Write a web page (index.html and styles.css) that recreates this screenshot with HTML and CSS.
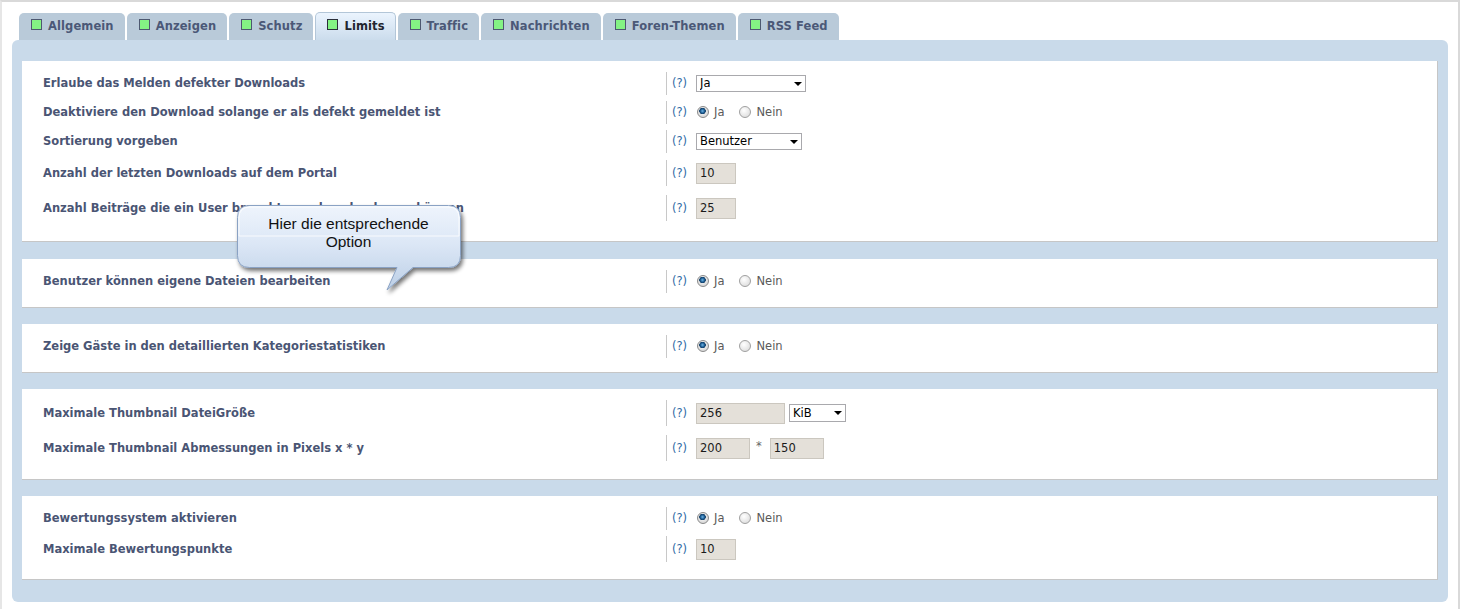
FILE: index.html
```html
<!DOCTYPE html>
<html lang="de">
<head>
    <meta charset="UTF-8">
    <title>Download Einstellungen - Limits</title>
    <link rel="stylesheet" href="styles.css">
</head>
<body>
<div class="page">
    <!-- Tabs -->
    <div class="tabs">
        <div class="tab"><span class="tab-icon"></span>Allgemein</div>
        <div class="tab"><span class="tab-icon"></span>Anzeigen</div>
        <div class="tab"><span class="tab-icon"></span>Schutz</div>
        <div class="tab active"><span class="tab-icon"></span>Limits</div>
        <div class="tab"><span class="tab-icon"></span>Traffic</div>
        <div class="tab"><span class="tab-icon"></span>Nachrichten</div>
        <div class="tab"><span class="tab-icon"></span>Foren-Themen</div>
        <div class="tab"><span class="tab-icon"></span>RSS Feed</div>
    </div>

    <div class="panel">
        <div class="box box-first">
            <div class="row">
                <div class="label">Erlaube das Melden defekter Downloads</div>
                <div class="value">
                    <span class="help">(?)</span>
                    <span class="select-wrap"><select class="select select-ja"><option>Ja</option><option>Nein</option></select></span>
                </div>
            </div>
            <div class="row">
                <div class="label">Deaktiviere den Download solange er als defekt gemeldet ist</div>
                <div class="value">
                    <span class="help">(?)</span>
                    <label class="radio"><input type="radio" name="r1" checked>Ja</label>
                    <label class="radio"><input type="radio" name="r1">Nein</label>
                </div>
            </div>
            <div class="row">
                <div class="label">Sortierung vorgeben</div>
                <div class="value">
                    <span class="help">(?)</span>
                    <span class="select-wrap"><select class="select select-sort"><option>Benutzer</option></select></span>
                </div>
            </div>
            <div class="row row-input">
                <div class="label">Anzahl der letzten Downloads auf dem Portal</div>
                <div class="value">
                    <span class="help">(?)</span>
                    <input class="text" type="text" value="10">
                </div>
            </div>
            <div class="row row-input">
                <div class="label">Anzahl Beiträge die ein User braucht, um downloaden zu können</div>
                <div class="value">
                    <span class="help">(?)</span>
                    <input class="text" type="text" value="25">
                </div>
            </div>
        </div>

        <div class="box">
            <div class="row">
                <div class="label">Benutzer können eigene Dateien bearbeiten</div>
                <div class="value">
                    <span class="help">(?)</span>
                    <label class="radio"><input type="radio" name="r2" checked>Ja</label>
                    <label class="radio"><input type="radio" name="r2">Nein</label>
                </div>
            </div>
        </div>

        <div class="box">
            <div class="row">
                <div class="label">Zeige Gäste in den detaillierten Kategoriestatistiken</div>
                <div class="value">
                    <span class="help">(?)</span>
                    <label class="radio"><input type="radio" name="r3" checked>Ja</label>
                    <label class="radio"><input type="radio" name="r3">Nein</label>
                </div>
            </div>
        </div>

        <div class="box box-thumb">
            <div class="row row-input">
                <div class="label">Maximale Thumbnail DateiGröße</div>
                <div class="value">
                    <span class="help">(?)</span>
                    <input class="text text-wide" type="text" value="256">
                    <span class="select-wrap"><select class="select select-unit"><option>KiB</option><option>MiB</option></select></span>
                </div>
            </div>
            <div class="row row-input">
                <div class="label">Maximale Thumbnail Abmessungen in Pixels x * y</div>
                <div class="value">
                    <span class="help">(?)</span>
                    <input class="text text-mid" type="text" value="200">
                    <span class="times">*</span>
                    <input class="text text-mid" type="text" value="150">
                </div>
            </div>
        </div>

        <div class="box box-last">
            <div class="row">
                <div class="label">Bewertungssystem aktivieren</div>
                <div class="value">
                    <span class="help">(?)</span>
                    <label class="radio"><input type="radio" name="r4" checked>Ja</label>
                    <label class="radio"><input type="radio" name="r4">Nein</label>
                </div>
            </div>
            <div class="row row-input row-tight">
                <div class="label">Maximale Bewertungspunkte</div>
                <div class="value">
                    <span class="help">(?)</span>
                    <input class="text" type="text" value="10">
                </div>
            </div>
        </div>
    </div>

    <!-- Callout bubble over the form -->
    <div class="bubble">
        <svg class="bubble-shape" width="245" height="100" viewBox="0 0 245 100">
            <defs>
                <linearGradient id="bubbleFill" x1="0" y1="0" x2="0" y2="1">
                    <stop offset="0" stop-color="#eef4fc"/>
                    <stop offset="0.45" stop-color="#dce7f6"/>
                    <stop offset="1" stop-color="#bccfe6"/>
                </linearGradient>
                <filter id="bubbleShadow" x="-10%" y="-10%" width="130%" height="140%">
                    <feGaussianBlur in="SourceAlpha" stdDeviation="2"/>
                    <feOffset dx="2" dy="3"/>
                    <feComponentTransfer><feFuncA type="linear" slope="0.55"/></feComponentTransfer>
                    <feMerge><feMergeNode/><feMergeNode in="SourceGraphic"/></feMerge>
                </filter>
            </defs>
            <path filter="url(#bubbleShadow)" fill="url(#bubbleFill)" stroke="#8aa2c4" stroke-width="1"
                  d="M19.5,7.5 H218.5 Q230.5,7.5 230.5,19.5 V57.5 Q230.5,69.5 218.5,69.5 H183 L157,92 L167,69.5 H19.5 Q7.5,69.5 7.5,57.5 V19.5 Q7.5,7.5 19.5,7.5 Z"/>
            <path fill="none" stroke="#ffffff" stroke-opacity="0.8" stroke-width="1"
                  d="M20,9 H218 Q229,9 229,20 V38 H9 V20 Q9,9 20,9 Z"/>
        </svg>
        <div class="bubble-text">Hier die entsprechende<br>Option</div>
    </div>
</div>
</body>
</html>
```

FILE: styles.css
```css
body {
    margin: 0;
    padding: 0;
    background-color: #ffffff;
    font-family: "DejaVu Sans", Verdana, sans-serif;
    font-size: 11.5px;
}
.page {
    position: relative;
    box-sizing: border-box;
    width: 1460px;
    min-height: 609px;
    border-top: 2px solid #d9d9d9;
    border-left: 2px solid #e6e6e6;
    border-right: 2px solid #d9d9d9;
    padding: 11px 10px 0 10px;
}
/* Tabs */
.tabs {
    display: flex;
    margin-left: 7px;
    height: 27px;
}
.tab {
    display: flex;
    align-items: center;
    box-sizing: border-box;
    height: 27px;
    padding: 0 11px 2px 12px;
    margin-right: 2px;
    background-color: #b9cad9;
    border-radius: 5px 5px 0 0;
    color: #4b5877;
    font-weight: bold;
    letter-spacing: 0.1px;
    white-space: nowrap;
}
.tab.active {
    height: 28px;
    margin-top: -1px;
    background: linear-gradient(#ebf4fe, #cbdcec);
    border: 1px solid #b3c6d8;
    border-bottom: none;
    padding: 0 10px 1px 11px;
    color: #23262f;
}
.tab-icon {
    display: inline-block;
    box-sizing: border-box;
    width: 11px;
    height: 11px;
    margin-right: 6px;
    margin-top: -3px;
    border: 1px solid #4e5870;
    background-color: #84f384;
}
.tab.active .tab-icon {
    border-color: #2b2f3a;
}
/* Main panel */
.panel {
    background-color: #c9daea;
    border-radius: 6px;
    padding: 21px 10px 22px 10px;
}
.box {
    background-color: #ffffff;
    border-right: 1px solid #c6c6c6;
    border-bottom: 1px solid #c6c6c6;
    padding: 10px 0 14px 0;
    margin-bottom: 16px;
}
.box-first {
    padding-bottom: 18px;
    margin-bottom: 17px;
}
.box-thumb {
    padding-top: 9px;
    padding-bottom: 16px;
}
.box-last {
    margin-bottom: 0;
    padding-bottom: 16px;
}
.row {
    display: flex;
    align-items: center;
    height: 24px;
}
.row + .row {
    margin-top: 5px;
}
.row-input {
    height: 30px;
}
.row-tight {
    height: 28px;
}
.label {
    box-sizing: border-box;
    width: 644px;
    padding-left: 21px;
    color: #4a5574;
    font-weight: bold;
    margin-top: -1px;
}
.value {
    display: flex;
    align-items: center;
    height: 23px;
    border-left: 1px solid #c8c8c8;
    padding-left: 5px;
}
.row-input .value {
    height: 26px;
}
.help {
    display: inline-block;
    width: 24px;
    color: #2f6ca6;
}
/* Form controls */
.radio {
    display: flex;
    align-items: center;
    color: #5a5a5a;
    margin-right: 14px;
}
.radio input {
    appearance: none;
    -webkit-appearance: none;
    box-sizing: border-box;
    width: 12px;
    height: 12px;
    margin: 0 5px 0 1px;
    border: 1px solid #a0a0a0;
    border-radius: 50%;
    background: radial-gradient(circle at 40% 35%, #ffffff, #d6d6d6);
}
.radio input:checked {
    border-color: #8a8a8a;
    background: radial-gradient(circle at 45% 40%, #6fb4e6 0, #1d5d92 2px, #103c66 3px, #e8e8e8 3.5px, #c8c8c8 100%);
}
.select-wrap {
    position: relative;
    display: inline-block;
}
.select-wrap::after {
    content: "";
    position: absolute;
    right: 4px;
    top: 7px;
    border-left: 4px solid transparent;
    border-right: 4px solid transparent;
    border-top: 4px solid #000;
    pointer-events: none;
}
.select {
    appearance: none;
    -webkit-appearance: none;
    box-sizing: border-box;
    display: block;
    height: 17px;
    border: 1px solid #a9a9ad;
    border-radius: 0;
    background-color: #ffffff;
    font-family: "DejaVu Sans", Verdana, sans-serif;
    font-size: 11.5px;
    color: #000;
    padding: 0 0 0 3px;
    margin: 0;
}
.select-ja {
    width: 110px;
}
.select-sort {
    width: 106px;
}
.select-unit {
    width: 57px;
    height: 18px;
}
.text {
    box-sizing: border-box;
    width: 40px;
    height: 21px;
    margin: 0;
    padding: 0 3px;
    border: 1px solid #cbc7bf;
    background-color: #e4e0d9;
    font-family: "DejaVu Sans", Verdana, sans-serif;
    font-size: 11.5px;
    color: #1a1a1a;
}
.text-wide {
    width: 89px;
    margin-right: 4px;
}
.text-mid {
    width: 54px;
}
.times {
    color: #666666;
    margin: -4px 8px 0 6px;
}
/* Callout bubble */
.bubble {
    position: absolute;
    left: 228px;
    top: 196px;
    width: 245px;
    height: 100px;
}
.bubble-shape {
    display: block;
}
.bubble-text {
    position: absolute;
    left: 7px;
    top: 17px;
    width: 223px;
    text-align: center;
    font-family: "Liberation Sans", Arial, sans-serif;
    font-size: 15.5px;
    line-height: 18px;
    color: #111111;
}
```
